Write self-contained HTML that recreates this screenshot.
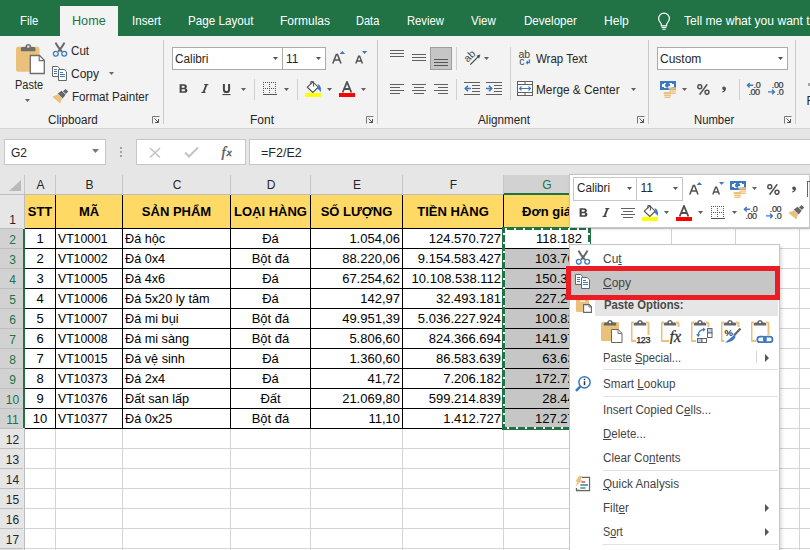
<!DOCTYPE html><html><head><meta charset="utf-8"><style>
html,body{margin:0;padding:0;width:810px;height:550px;overflow:hidden;background:#fff;font-family:"Liberation Sans", sans-serif;}
.t{position:absolute;white-space:pre;}
.r{position:absolute;}
</style></head><body>
<div class="r" style="left:0px;top:0px;width:810px;height:36px;background:#217346"></div>
<div class="r" style="left:60px;top:6px;width:58px;height:30px;background:#f3f3f3"></div>
<div class="t" style="left:19.5px;top:14px;font-size:13px;line-height:13px;color:#ffffff;font-weight:400;transform:scaleX(0.875);transform-origin:0 0;">File</div>
<div class="t" style="left:72px;top:14px;font-size:13px;line-height:13px;color:#217346;font-weight:400;transform:scaleX(0.971);transform-origin:0 0;">Home</div>
<div class="t" style="left:132px;top:14px;font-size:13px;line-height:13px;color:#ffffff;font-weight:400;transform:scaleX(0.891);transform-origin:0 0;">Insert</div>
<div class="t" style="left:188px;top:14px;font-size:13px;line-height:13px;color:#ffffff;font-weight:400;transform:scaleX(0.897);transform-origin:0 0;">Page Layout</div>
<div class="t" style="left:280px;top:14px;font-size:13px;line-height:13px;color:#ffffff;font-weight:400;transform:scaleX(0.923);transform-origin:0 0;">Formulas</div>
<div class="t" style="left:356px;top:14px;font-size:13px;line-height:13px;color:#ffffff;font-weight:400;transform:scaleX(0.848);transform-origin:0 0;">Data</div>
<div class="t" style="left:407px;top:14px;font-size:13px;line-height:13px;color:#ffffff;font-weight:400;transform:scaleX(0.864);transform-origin:0 0;">Review</div>
<div class="t" style="left:471px;top:14px;font-size:13px;line-height:13px;color:#ffffff;font-weight:400;transform:scaleX(0.886);transform-origin:0 0;">View</div>
<div class="t" style="left:523.5px;top:14px;font-size:13px;line-height:13px;color:#ffffff;font-weight:400;transform:scaleX(0.892);transform-origin:0 0;">Developer</div>
<div class="t" style="left:603.5px;top:14px;font-size:13px;line-height:13px;color:#ffffff;font-weight:400;transform:scaleX(0.927);transform-origin:0 0;">Help</div>
<div class="t" style="left:683.5px;top:14px;font-size:13px;line-height:13px;color:#ffffff;font-weight:400;transform:scaleX(0.93);transform-origin:0 0;">Tell me what you want to do</div>
<svg class="r" style="left:656px;top:12px" width="16" height="18" viewBox="0 0 16 18"><path d="M8 1.2C5 1.2 2.6 3.5 2.6 6.6C2.6 8.6 3.6 9.8 4.6 10.9C5.1 11.5 5.4 12.2 5.4 13V13.8H10.6V13C10.6 12.2 10.9 11.5 11.4 10.9C12.4 9.8 13.4 8.6 13.4 6.6C13.4 3.5 11 1.2 8 1.2Z" fill="none" stroke="#fff" stroke-width="1.2"/><path d="M5.6 15.5H10.4M6.3 17.2H9.7" stroke="#fff" stroke-width="1.1"/></svg>
<div class="r" style="left:0px;top:36px;width:810px;height:92px;background:#f3f3f3"></div>
<div class="r" style="left:0px;top:128px;width:810px;height:1px;background:#d5d5d5"></div>
<div class="r" style="left:163px;top:40px;width:1px;height:84px;background:#c8c8c8"></div>
<div class="r" style="left:377px;top:40px;width:1px;height:84px;background:#c8c8c8"></div>
<div class="r" style="left:648px;top:40px;width:1px;height:84px;background:#c8c8c8"></div>
<div class="r" style="left:795px;top:40px;width:1px;height:84px;background:#c8c8c8"></div>
<div class="t" style="left:48px;top:114px;font-size:12px;line-height:12px;color:#262626;font-weight:400;transform:scaleX(0.969);transform-origin:0 0;">Clipboard</div>
<div class="t" style="left:250px;top:114px;font-size:12px;line-height:12px;color:#262626;font-weight:400;">Font</div>
<div class="t" style="left:478px;top:114px;font-size:12px;line-height:12px;color:#262626;font-weight:400;transform:scaleX(0.976);transform-origin:0 0;">Alignment</div>
<div class="t" style="left:693.5px;top:114px;font-size:12px;line-height:12px;color:#262626;font-weight:400;transform:scaleX(0.942);transform-origin:0 0;">Number</div>
<svg class="r" style="left:152px;top:116px" width="8" height="8" viewBox="0 0 8 8"><path d="M0.5 7.5V0.5H7.5" fill="none" stroke="#777" stroke-width="1"/><path d="M2.5 2.5L6.5 6.5M3 6.5H6.5V3" fill="none" stroke="#505050" stroke-width="1"/></svg>
<svg class="r" style="left:366px;top:116px" width="8" height="8" viewBox="0 0 8 8"><path d="M0.5 7.5V0.5H7.5" fill="none" stroke="#777" stroke-width="1"/><path d="M2.5 2.5L6.5 6.5M3 6.5H6.5V3" fill="none" stroke="#505050" stroke-width="1"/></svg>
<svg class="r" style="left:637px;top:116px" width="8" height="8" viewBox="0 0 8 8"><path d="M0.5 7.5V0.5H7.5" fill="none" stroke="#777" stroke-width="1"/><path d="M2.5 2.5L6.5 6.5M3 6.5H6.5V3" fill="none" stroke="#505050" stroke-width="1"/></svg>
<svg class="r" style="left:784px;top:116px" width="8" height="8" viewBox="0 0 8 8"><path d="M0.5 7.5V0.5H7.5" fill="none" stroke="#777" stroke-width="1"/><path d="M2.5 2.5L6.5 6.5M3 6.5H6.5V3" fill="none" stroke="#505050" stroke-width="1"/></svg>
<svg class="r" style="left:14px;top:42px" width="32" height="34" viewBox="0 0 32 34">
<rect x="2" y="4.8" width="23.5" height="25" rx="2.2" fill="#eac17a"/>
<path d="M6.9 9.3V6.4C6.9 5.6 7.5 5 8.3 5H11.3C11.4 3.3 12.6 2 14.3 2C16 2 17.2 3.3 17.3 5H20C20.8 5 21.4 5.6 21.4 6.4V9.3Z" fill="#6d6d6d"/>
<rect x="13.2" y="3.6" width="2.2" height="2" fill="#f3f3f3"/>
<path d="M16.3 13.5H25.5L30.3 18.3V31.5H16.3Z" fill="#fff" stroke="#6d6d6d" stroke-width="1.3"/>
<path d="M25.2 13.8V18.6H30" fill="none" stroke="#6d6d6d" stroke-width="1.1"/>
</svg>
<div class="t" style="left:14.7px;top:79px;font-size:12px;line-height:12px;color:#262626;font-weight:400;transform:scaleX(0.913);transform-origin:0 0;">Paste</div>
<svg class="r" style="left:25px;top:99px" width="5" height="3" viewBox="0 0 5 3"><path d="M0 0H5L2.5 3Z" fill="#666"/></svg>
<svg class="r" style="left:52px;top:42px" width="16" height="15" viewBox="0 0 16 15"><path d="M3.6 0.6C4.8 3.4 7 6.2 9.8 9.6M12.4 0.6C11.2 3.4 9 6.2 6.2 9.6" stroke="#666" stroke-width="2" fill="none"/>
<circle cx="3.8" cy="11.8" r="2.4" fill="none" stroke="#3c79c2" stroke-width="1.3"/>
<circle cx="12.2" cy="11.8" r="2.4" fill="none" stroke="#3c79c2" stroke-width="1.3"/></svg>
<div class="t" style="left:71px;top:45px;font-size:12px;line-height:12px;color:#262626;font-weight:400;transform:scaleX(0.968);transform-origin:0 0;">Cut</div>
<svg class="r" style="left:52px;top:66px" width="16" height="15" viewBox="0 0 16 15"><path d="M0.5 0.5H5.7L7.5 2.3V10.5H0.5Z" fill="#fff" stroke="#666" stroke-width="1"/>
<path d="M6.5 3.5H12.2L14.5 5.8V14.5H6.5Z" fill="#fff" stroke="#666" stroke-width="1"/>
<path d="M2 3.5H5M2 5.5H5M2 7.5H5M8 6.5H11M8 8.5H13M8 10.5H13" stroke="#3c79c2" stroke-width="1"/></svg>
<div class="t" style="left:71px;top:68px;font-size:12px;line-height:12px;color:#262626;font-weight:400;">Copy</div>
<svg class="r" style="left:109px;top:72px" width="5" height="3" viewBox="0 0 5 3"><path d="M0 0H5L2.5 3Z" fill="#666"/></svg>
<svg class="r" style="left:52px;top:89px" width="17" height="15" viewBox="0 0 17 15"><path d="M0.3 7.8L6 5.3L10 9.3L8.3 14.4Z" fill="#eac17a"/>
<path d="M5.8 4.6L9.6 1.7L13.6 5.7L10.7 9.5Z" fill="#666"/>
<path d="M11 2.2L13.6 0L16.2 2.6L13.9 5.1Z" fill="#666"/></svg>
<div class="t" style="left:71.5px;top:91px;font-size:12px;line-height:12px;color:#262626;font-weight:400;transform:scaleX(0.966);transform-origin:0 0;">Format Painter</div>
<div class="r" style="left:172px;top:47px;width:111px;height:23px;background:#fff;border:1px solid #ababab;box-sizing:border-box"></div>
<div class="r" style="left:282px;top:47px;width:44px;height:23px;background:#fff;border:1px solid #ababab;box-sizing:border-box"></div>
<div class="t" style="left:175px;top:53px;font-size:12px;line-height:12px;color:#262626;font-weight:400;transform:scaleX(0.982);transform-origin:0 0;">Calibri</div>
<svg class="r" style="left:273px;top:57px" width="5" height="3" viewBox="0 0 5 3"><path d="M0 0H5L2.5 3Z" fill="#555"/></svg>
<div class="t" style="left:286px;top:53px;font-size:12px;line-height:12px;color:#262626;font-weight:400;">11</div>
<svg class="r" style="left:316px;top:57px" width="5" height="3" viewBox="0 0 5 3"><path d="M0 0H5L2.5 3Z" fill="#555"/></svg>
<svg class="r" style="left:332px;top:51px" width="14" height="13" viewBox="0 0 14 13"><path d="M0.8 12.6L4.3 3.4H5.5L9 12.6M2.4 9.1H7.4" fill="none" stroke="#505050" stroke-width="1.5"/><path d="M7.6 2.9H13.1L10.35 0Z" fill="#3c79c2"/></svg>
<svg class="r" style="left:355px;top:51px" width="13" height="13" viewBox="0 0 13 13"><path d="M0.8 12.6L3.6 5.2H4.6L7.4 12.6M2.1 10H6.1" fill="none" stroke="#505050" stroke-width="1.4"/><path d="M7 0.1H12.2L9.6 3.1Z" fill="#3c79c2"/></svg>
<svg class="r" style="left:178.5px;top:84px" width="9" height="9" viewBox="0 0 9 9"><path d="M0.6 0.2H4.9C7 0.2 7.9 1.3 7.9 2.5C7.9 3.5 7.3 4.1 6.5 4.35C7.6 4.6 8.4 5.4 8.4 6.5C8.4 7.9 7.4 8.8 5.3 8.8H0.6Z M2.7 1.8V3.7H4.5C5.3 3.7 5.7 3.3 5.7 2.75C5.7 2.2 5.3 1.8 4.5 1.8Z M2.7 5.2V7.2H4.8C5.7 7.2 6.1 6.8 6.1 6.2C6.1 5.6 5.7 5.2 4.8 5.2Z" fill="#444" fill-rule="evenodd"/></svg>
<svg class="r" style="left:200.5px;top:84px" width="8" height="9" viewBox="0 0 8 9"><path d="M3.3 0.6H7.3M0.5 8.4H4.5M5.4 0.6L2.6 8.4" stroke="#444" stroke-width="1.2" fill="none"/><path d="M5.3 1.2L2.7 7.8" stroke="#444" stroke-width="1.7"/></svg>
<svg class="r" style="left:222px;top:84px" width="9" height="12" viewBox="0 0 9 12"><path d="M1.9 0V5.4C1.9 7.4 2.9 8.1 4.5 8.1C6.1 8.1 7.1 7.4 7.1 5.4V0" stroke="#444" stroke-width="2" fill="none"/><rect x="0.5" y="10" width="8" height="1.1" fill="#444"/></svg>
<svg class="r" style="left:241px;top:88px" width="5" height="3" viewBox="0 0 5 3"><path d="M0 0H5L2.5 3Z" fill="#5f5f5f"/></svg>
<div class="r" style="left:254px;top:79px;width:1px;height:21px;background:#d0d0d0"></div>
<svg class="r" style="left:263px;top:82px" width="14" height="13" viewBox="0 0 14 13"><rect x="0" y="0" width="1" height="1" fill="#555"/><rect x="2" y="0" width="1" height="1" fill="#555"/><rect x="4" y="0" width="1" height="1" fill="#555"/><rect x="6" y="0" width="1" height="1" fill="#555"/><rect x="8" y="0" width="1" height="1" fill="#555"/><rect x="10" y="0" width="1" height="1" fill="#555"/><rect x="12" y="0" width="1" height="1" fill="#555"/><rect x="0" y="6" width="1" height="1" fill="#555"/><rect x="2" y="6" width="1" height="1" fill="#555"/><rect x="4" y="6" width="1" height="1" fill="#555"/><rect x="6" y="6" width="1" height="1" fill="#555"/><rect x="8" y="6" width="1" height="1" fill="#555"/><rect x="10" y="6" width="1" height="1" fill="#555"/><rect x="12" y="6" width="1" height="1" fill="#555"/><rect x="0" y="0" width="1" height="1" fill="#555"/><rect x="0" y="2" width="1" height="1" fill="#555"/><rect x="0" y="4" width="1" height="1" fill="#555"/><rect x="0" y="6" width="1" height="1" fill="#555"/><rect x="0" y="8" width="1" height="1" fill="#555"/><rect x="0" y="10" width="1" height="1" fill="#555"/><rect x="6" y="0" width="1" height="1" fill="#555"/><rect x="6" y="2" width="1" height="1" fill="#555"/><rect x="6" y="4" width="1" height="1" fill="#555"/><rect x="6" y="6" width="1" height="1" fill="#555"/><rect x="6" y="8" width="1" height="1" fill="#555"/><rect x="6" y="10" width="1" height="1" fill="#555"/><rect x="12" y="0" width="1" height="1" fill="#555"/><rect x="12" y="2" width="1" height="1" fill="#555"/><rect x="12" y="4" width="1" height="1" fill="#555"/><rect x="12" y="6" width="1" height="1" fill="#555"/><rect x="12" y="8" width="1" height="1" fill="#555"/><rect x="12" y="10" width="1" height="1" fill="#555"/><rect x="0" y="12" width="14" height="1" fill="#555"/></svg>
<svg class="r" style="left:284px;top:88px" width="5" height="3" viewBox="0 0 5 3"><path d="M0 0H5L2.5 3Z" fill="#5f5f5f"/></svg>
<div class="r" style="left:297px;top:79px;width:1px;height:21px;background:#d0d0d0"></div>
<svg class="r" style="left:305px;top:81px" width="17" height="12" viewBox="0 0 17 12"><path d="M2.3 6.2L7.8 0.9L13.3 6.2L7.8 11.5Z" fill="#fff" stroke="#505050" stroke-width="1.1"/><path d="M5.8 3.6V0.6H8.4V5.5" fill="none" stroke="#505050" stroke-width="1"/><path d="M12.6 3.2C15.2 3.8 16.6 6.3 15.8 11.2C14.8 9.6 13.4 8.4 12.3 7.6L13.6 6.2Z" fill="#3c79c2"/></svg>
<div class="r" style="left:305px;top:93px;width:16px;height:4px;background:#ffff00"></div>
<svg class="r" style="left:327px;top:88px" width="5" height="3" viewBox="0 0 5 3"><path d="M0 0H5L2.5 3Z" fill="#5f5f5f"/></svg>
<svg class="r" style="left:339px;top:81px" width="16" height="12" viewBox="0 0 16 12"><path d="M3.6 11.5L8 1L12.4 11.5M5.2 8H10.8" fill="none" stroke="#505050" stroke-width="1.8"/></svg>
<div class="r" style="left:339px;top:93px;width:16px;height:4px;background:#ff0000"></div>
<svg class="r" style="left:361px;top:88px" width="5" height="3" viewBox="0 0 5 3"><path d="M0 0H5L2.5 3Z" fill="#5f5f5f"/></svg>
<svg class="r" style="left:390px;top:50px" width="18" height="16" viewBox="0 0 18 16"><rect x="0" y="0" width="14" height="1" fill="#606060"/><rect x="0" y="3" width="14" height="1" fill="#606060"/><rect x="0" y="6" width="14" height="1" fill="#606060"/></svg>
<svg class="r" style="left:412px;top:54px" width="18" height="16" viewBox="0 0 18 16"><rect x="0" y="0" width="14" height="1" fill="#606060"/><rect x="0" y="3" width="14" height="1" fill="#606060"/><rect x="0" y="6" width="14" height="1" fill="#606060"/></svg>
<div class="r" style="left:430px;top:47px;width:22px;height:23px;background:#c5c5c5;border:1px solid #9e9e9e;box-sizing:border-box"></div>
<svg class="r" style="left:434px;top:59px" width="18" height="16" viewBox="0 0 18 16"><rect x="0" y="0" width="14" height="1" fill="#555"/><rect x="0" y="3" width="14" height="1" fill="#555"/><rect x="0" y="6" width="14" height="1" fill="#555"/></svg>
<div class="r" style="left:456px;top:47px;width:1px;height:23px;background:#d0d0d0"></div>
<svg class="r" style="left:462px;top:47px" width="28" height="20" viewBox="0 0 28 20">
<text x="7.1" y="8.7" text-anchor="middle" dominant-baseline="central" font-family="Liberation Sans" font-size="10.5" fill="#4a4a4a" transform="rotate(-45 7.1 8.7)">ab</text>
<path d="M8.3 17.6L16.5 9.4" stroke="#4a4a4a" stroke-width="1.3" fill="none"/><path d="M18.3 7.6L14.4 8.7L17.2 11.5Z" fill="#4a4a4a"/>
</svg>
<svg class="r" style="left:484px;top:57px" width="5" height="3" viewBox="0 0 5 3"><path d="M0 0H5L2.5 3Z" fill="#5f5f5f"/></svg>
<div class="r" style="left:510px;top:47px;width:1px;height:53px;background:#d0d0d0"></div>
<svg class="r" style="left:517px;top:49px" width="16" height="17" viewBox="0 0 16 17">
<text x="1.6" y="8.6" font-family="Liberation Sans" font-size="10.5" fill="#444" letter-spacing="-0.2">ab</text>
<text x="2.2" y="15.9" font-family="Liberation Sans" font-size="10.5" fill="#444">c</text>
<path d="M12.4 10.6V13.6H9.6" stroke="#3c79c2" stroke-width="1.4" fill="none"/><path d="M8.6 13.6L11 11.4V15.8Z" fill="#3c79c2"/>
</svg>
<div class="t" style="left:536px;top:53px;font-size:12px;line-height:12px;color:#262626;font-weight:400;transform:scaleX(0.956);transform-origin:0 0;">Wrap Text</div>
<svg class="r" style="left:390px;top:84px" width="18" height="16" viewBox="0 0 18 16"><rect x="0" y="0" width="14" height="1" fill="#606060"/><rect x="0" y="3" width="10" height="1" fill="#606060"/><rect x="0" y="6" width="14" height="1" fill="#606060"/><rect x="0" y="9" width="10" height="1" fill="#606060"/></svg>
<svg class="r" style="left:412px;top:84px" width="18" height="16" viewBox="0 0 18 16"><rect x="0" y="0" width="14" height="1" fill="#606060"/><rect x="2" y="3" width="10" height="1" fill="#606060"/><rect x="0" y="6" width="14" height="1" fill="#606060"/><rect x="2" y="9" width="10" height="1" fill="#606060"/></svg>
<svg class="r" style="left:434px;top:84px" width="18" height="16" viewBox="0 0 18 16"><rect x="0" y="0" width="14" height="1" fill="#606060"/><rect x="4" y="3" width="10" height="1" fill="#606060"/><rect x="0" y="6" width="14" height="1" fill="#606060"/><rect x="4" y="9" width="10" height="1" fill="#606060"/></svg>
<div class="r" style="left:456px;top:79px;width:1px;height:21px;background:#d0d0d0"></div>
<svg class="r" style="left:464px;top:82px" width="17" height="13" viewBox="0 0 17 13">
<path d="M0 0.5H16M8 3.5H16M8 6.5H16M8 9.5H16M0 12.5H16" stroke="#606060" stroke-width="1"/>
<path d="M7 6.5H1.5M4 3.8L1.3 6.5L4 9.2" stroke="#3c79c2" stroke-width="1.6" fill="none"/>
</svg>
<svg class="r" style="left:486px;top:82px" width="17" height="13" viewBox="0 0 17 13">
<path d="M0 0.5H16M8 3.5H16M8 6.5H16M8 9.5H16M0 12.5H16" stroke="#606060" stroke-width="1"/>
<path d="M0 6.5H5.5M3 3.8L5.7 6.5L3 9.2" stroke="#3c79c2" stroke-width="1.6" fill="none"/>
</svg>
<svg class="r" style="left:517px;top:81px" width="16" height="15" viewBox="0 0 16 15">
<rect x="0.5" y="0.5" width="15" height="14" fill="#fff" stroke="#606060"/>
<path d="M0.5 3.5H15.5M0.5 11.5H15.5M8 0.5V3.5M8 11.5V14.5" stroke="#606060" stroke-width="1"/>
<path d="M2.5 7.5H13.5M4.5 5.5L2.5 7.5L4.5 9.5M11.5 5.5L13.5 7.5L11.5 9.5" stroke="#3c79c2" stroke-width="1.1" fill="none"/>
</svg>
<div class="t" style="left:536px;top:84px;font-size:12px;line-height:12px;color:#262626;font-weight:400;transform:scaleX(0.987);transform-origin:0 0;">Merge &amp; Center</div>
<svg class="r" style="left:631px;top:88px" width="5" height="3" viewBox="0 0 5 3"><path d="M0 0H5L2.5 3Z" fill="#5f5f5f"/></svg>
<div class="r" style="left:657px;top:47px;width:131px;height:23px;background:#fff;border:1px solid #ababab;box-sizing:border-box"></div>
<div class="t" style="left:660px;top:53px;font-size:12px;line-height:12px;color:#262626;font-weight:400;">Custom</div>
<svg class="r" style="left:778px;top:57px" width="5" height="3" viewBox="0 0 5 3"><path d="M0 0H5L2.5 3Z" fill="#505050"/></svg>
<svg class="r" style="left:660px;top:81px" width="18" height="17" viewBox="0 0 18 17"><rect x="0" y="0" width="16" height="9" fill="#3c79c2"/>
<path d="M4 2H12V3H14V6H12V7H4V6H2V3H4Z" fill="#fff"/>
<circle cx="7.6" cy="4.3" r="2.5" fill="#3c79c2"/><rect x="8.4" y="5" width="1.9" height="1.9" fill="#fff"/>
<rect x="8.6" y="6.2" width="7.6" height="2.6" rx="1.3" fill="#eac17a"/><rect x="9" y="9.4" width="7" height="1.3" rx="0.65" fill="#eac17a"/><rect x="10" y="11.6" width="6" height="1.3" rx="0.65" fill="#eac17a"/>
<rect x="3.6" y="11" width="7.6" height="2.6" rx="1.3" fill="#eac17a"/><rect x="4" y="14" width="7" height="1.3" rx="0.65" fill="#eac17a"/><rect x="4.5" y="15.8" width="6" height="1.2" rx="0.6" fill="#eac17a"/></svg>
<svg class="r" style="left:682px;top:88px" width="5" height="3" viewBox="0 0 5 3"><path d="M0 0H5L2.5 3Z" fill="#5f5f5f"/></svg>
<svg class="r" style="left:696.5px;top:84px" width="13" height="11" viewBox="0 0 13 11"><circle cx="2.8" cy="2.7" r="2" fill="none" stroke="#505050" stroke-width="1.5"/><circle cx="10" cy="8.3" r="2" fill="none" stroke="#505050" stroke-width="1.5"/><path d="M10.2 0.3L2.6 10.7" stroke="#505050" stroke-width="1.5"/></svg>
<svg class="r" style="left:721px;top:85.5px" width="6" height="7" viewBox="0 0 6 7"><path d="M2.8 0.5C4.3 0.5 5 1.5 5 2.7C5 4.3 3.8 5.8 1.3 6.5L1 5.6C2.3 5.1 2.9 4.4 3 3.9C1.8 3.9 1.2 3.2 1.2 2.3C1.2 1.2 1.9 0.5 2.8 0.5Z" fill="#505050"/></svg>
<div class="r" style="left:739px;top:79px;width:1px;height:21px;background:#d0d0d0"></div>
<svg class="r" style="left:746px;top:82px" width="17" height="13" viewBox="0 0 17 13"><text x="7.6" y="5.8" font-family="Liberation Sans" font-size="9" fill="#333" stroke="#333" stroke-width="0.2" letter-spacing="-0.4">.0</text>
<text x="2.4" y="12.8" font-family="Liberation Sans" font-size="9" fill="#333" stroke="#333" stroke-width="0.2" letter-spacing="-0.4">.00</text>
<path d="M7.2 3.3H1.4M3.7 1L1.4 3.3L3.7 5.6" stroke="#3c79c2" stroke-width="1.4" fill="none"/></svg>
<svg class="r" style="left:767px;top:82px" width="18" height="13" viewBox="0 0 18 13"><text x="4.8" y="5.8" font-family="Liberation Sans" font-size="9" fill="#333" stroke="#333" stroke-width="0.2" letter-spacing="-0.4">.00</text>
<text x="9.6" y="12.8" font-family="Liberation Sans" font-size="9" fill="#333" stroke="#333" stroke-width="0.2" letter-spacing="-0.4">.0</text>
<path d="M1 9.9H7.4M5.1 7.6L7.4 9.9L5.1 12.2" stroke="#3c79c2" stroke-width="1.4" fill="none"/></svg>
<div class="t" style="left:806.5px;top:95px;font-size:12px;line-height:12px;color:#262626;font-weight:400;">F</div>
<div class="r" style="left:808px;top:83px;width:2px;height:3px;background:#a0a0a0;border-radius:1px 0 0 1px"></div>
<div class="r" style="left:0px;top:129px;width:810px;height:46px;background:#e6e6e6"></div>
<div class="r" style="left:4px;top:139px;width:102px;height:26px;background:#fff;border:1px solid #c6c6c6;box-sizing:border-box"></div>
<div class="t" style="left:11px;top:147px;font-size:12px;line-height:12px;color:#262626;font-weight:400;">G2</div>
<svg class="r" style="left:92px;top:149px" width="7" height="4" viewBox="0 0 7 4"><path d="M0 0H7L3.5 4Z" fill="#777"/></svg>
<div class="r" style="left:120px;top:147px;width:2px;height:2px;background:#a3a3a3"></div>
<div class="r" style="left:120px;top:151px;width:2px;height:2px;background:#a3a3a3"></div>
<div class="r" style="left:120px;top:155px;width:2px;height:2px;background:#a3a3a3"></div>
<div class="r" style="left:136px;top:139px;width:110px;height:26px;background:#fff;border:1px solid #c6c6c6;box-sizing:border-box"></div>
<svg class="r" style="left:149px;top:147px" width="12" height="11" viewBox="0 0 12 11"><path d="M1 1L11 10.5M11 1L1 10.5" stroke="#c3c3c3" stroke-width="1.5"/></svg>
<svg class="r" style="left:184px;top:146px" width="15" height="12" viewBox="0 0 15 12"><path d="M1 6.5L5 10.5L14 1.5" stroke="#c3c3c3" stroke-width="2" fill="none"/></svg>
<svg class="r" style="left:220px;top:144px" width="16" height="16" viewBox="0 0 16 16"><text x="1.5" y="12.5" font-family="Liberation Serif" font-style="italic" font-size="14.5" fill="#555" stroke="#555" stroke-width="0.35">f</text><text x="6.8" y="12.3" font-family="Liberation Serif" font-style="italic" font-size="11" fill="#555" stroke="#555" stroke-width="0.35">x</text></svg>
<div class="r" style="left:249px;top:139px;width:561px;height:26px;background:#fff;border:1px solid #c6c6c6;border-right:none;box-sizing:border-box"></div>
<div class="t" style="left:260.5px;top:147px;font-size:12px;line-height:12px;color:#262626;font-weight:400;transform:scaleX(1.044);transform-origin:0 0;">=F2/E2</div>
<div class="r" style="left:0px;top:175px;width:810px;height:20px;background:#e6e6e6"></div>
<div class="r" style="left:25px;top:195px;width:785px;height:355px;background:#fff"></div>
<div class="r" style="left:0px;top:195px;width:24px;height:355px;background:#e6e6e6"></div>
<div class="r" style="left:0px;top:229px;width:23px;height:199px;background:#d2d2d2"></div>
<div class="r" style="left:23px;top:229px;width:2px;height:199px;background:#217346"></div>
<div class="r" style="left:0px;top:228px;width:23px;height:1px;background:#bfbfbf"></div>
<div class="r" style="left:0px;top:248px;width:23px;height:1px;background:#bfbfbf"></div>
<div class="r" style="left:0px;top:268px;width:23px;height:1px;background:#bfbfbf"></div>
<div class="r" style="left:0px;top:288px;width:23px;height:1px;background:#bfbfbf"></div>
<div class="r" style="left:0px;top:308px;width:23px;height:1px;background:#bfbfbf"></div>
<div class="r" style="left:0px;top:328px;width:23px;height:1px;background:#bfbfbf"></div>
<div class="r" style="left:0px;top:348px;width:23px;height:1px;background:#bfbfbf"></div>
<div class="r" style="left:0px;top:368px;width:23px;height:1px;background:#bfbfbf"></div>
<div class="r" style="left:0px;top:388px;width:23px;height:1px;background:#bfbfbf"></div>
<div class="r" style="left:0px;top:408px;width:23px;height:1px;background:#bfbfbf"></div>
<div class="r" style="left:0px;top:428px;width:23px;height:1px;background:#bfbfbf"></div>
<div class="r" style="left:0px;top:448px;width:23px;height:1px;background:#bfbfbf"></div>
<div class="r" style="left:0px;top:468px;width:23px;height:1px;background:#bfbfbf"></div>
<div class="r" style="left:0px;top:488px;width:23px;height:1px;background:#bfbfbf"></div>
<div class="r" style="left:0px;top:508px;width:23px;height:1px;background:#bfbfbf"></div>
<div class="r" style="left:0px;top:528px;width:23px;height:1px;background:#bfbfbf"></div>
<div class="r" style="left:0px;top:548px;width:23px;height:1px;background:#bfbfbf"></div>
<div class="r" style="left:0px;top:568px;width:23px;height:1px;background:#bfbfbf"></div>
<div class="r" style="left:24px;top:175px;width:1px;height:54px;background:#bdbdbd"></div>
<div class="r" style="left:24px;top:428px;width:1px;height:122px;background:#bdbdbd"></div>
<div class="r" style="left:504px;top:175px;width:85px;height:18px;background:#d2d2d2"></div>
<div class="r" style="left:503px;top:193px;width:87px;height:2px;background:#217346"></div>
<div class="r" style="left:0px;top:194px;width:503px;height:1px;background:#bdbdbd"></div>
<div class="r" style="left:590px;top:194px;width:220px;height:1px;background:#bdbdbd"></div>
<div class="r" style="left:24px;top:175px;width:1px;height:19px;background:#c6c6c6"></div>
<div class="t" style="left:-59.5px;width:200px;text-align:center;top:179px;font-size:12px;line-height:12px;color:#262626;font-weight:400;">A</div>
<div class="r" style="left:55px;top:175px;width:1px;height:19px;background:#c6c6c6"></div>
<div class="t" style="left:-10.5px;width:200px;text-align:center;top:179px;font-size:12px;line-height:12px;color:#262626;font-weight:400;">B</div>
<div class="r" style="left:122px;top:175px;width:1px;height:19px;background:#c6c6c6"></div>
<div class="t" style="left:77.0px;width:200px;text-align:center;top:179px;font-size:12px;line-height:12px;color:#262626;font-weight:400;">C</div>
<div class="r" style="left:230px;top:175px;width:1px;height:19px;background:#c6c6c6"></div>
<div class="t" style="left:171.0px;width:200px;text-align:center;top:179px;font-size:12px;line-height:12px;color:#262626;font-weight:400;">D</div>
<div class="r" style="left:310px;top:175px;width:1px;height:19px;background:#c6c6c6"></div>
<div class="t" style="left:257.0px;width:200px;text-align:center;top:179px;font-size:12px;line-height:12px;color:#262626;font-weight:400;">E</div>
<div class="r" style="left:402px;top:175px;width:1px;height:19px;background:#c6c6c6"></div>
<div class="t" style="left:353.5px;width:200px;text-align:center;top:179px;font-size:12px;line-height:12px;color:#262626;font-weight:400;">F</div>
<div class="r" style="left:503px;top:175px;width:1px;height:19px;background:#c6c6c6"></div>
<div class="t" style="left:447.0px;width:200px;text-align:center;top:179px;font-size:12px;line-height:12px;color:#217346;font-weight:400;">G</div>
<div class="r" style="left:589px;top:175px;width:1px;height:19px;background:#c6c6c6"></div>
<div class="t" style="left:531.0px;width:200px;text-align:center;top:179px;font-size:12px;line-height:12px;color:#262626;font-weight:400;">H</div>
<div class="r" style="left:671px;top:175px;width:1px;height:19px;background:#c6c6c6"></div>
<div class="t" style="left:604.0px;width:200px;text-align:center;top:179px;font-size:12px;line-height:12px;color:#262626;font-weight:400;">I</div>
<div class="r" style="left:735px;top:175px;width:1px;height:19px;background:#c6c6c6"></div>
<div class="t" style="left:668.0px;width:200px;text-align:center;top:179px;font-size:12px;line-height:12px;color:#262626;font-weight:400;">J</div>
<div class="r" style="left:799px;top:175px;width:1px;height:19px;background:#c6c6c6"></div>
<div class="t" style="left:735.5px;width:200px;text-align:center;top:179px;font-size:12px;line-height:12px;color:#262626;font-weight:400;">K</div>
<svg class="r" style="left:9px;top:180px" width="12" height="11" viewBox="0 0 12 11"><path d="M12 0V11H0Z" fill="#b9b9b9"/></svg>
<div class="t" style="left:0.5px;width:24px;text-align:center;top:214px;font-size:12px;line-height:12px;color:#262626;font-weight:400;">1</div>
<div class="t" style="left:0.5px;width:24px;text-align:center;top:234px;font-size:12px;line-height:12px;color:#217346;font-weight:400;">2</div>
<div class="t" style="left:0.5px;width:24px;text-align:center;top:254px;font-size:12px;line-height:12px;color:#217346;font-weight:400;">3</div>
<div class="t" style="left:0.5px;width:24px;text-align:center;top:274px;font-size:12px;line-height:12px;color:#217346;font-weight:400;">4</div>
<div class="t" style="left:0.5px;width:24px;text-align:center;top:294px;font-size:12px;line-height:12px;color:#217346;font-weight:400;">5</div>
<div class="t" style="left:0.5px;width:24px;text-align:center;top:314px;font-size:12px;line-height:12px;color:#217346;font-weight:400;">6</div>
<div class="t" style="left:0.5px;width:24px;text-align:center;top:334px;font-size:12px;line-height:12px;color:#217346;font-weight:400;">7</div>
<div class="t" style="left:0.5px;width:24px;text-align:center;top:354px;font-size:12px;line-height:12px;color:#217346;font-weight:400;">8</div>
<div class="t" style="left:0.5px;width:24px;text-align:center;top:374px;font-size:12px;line-height:12px;color:#217346;font-weight:400;">9</div>
<div class="t" style="left:0.5px;width:24px;text-align:center;top:394px;font-size:12px;line-height:12px;color:#217346;font-weight:400;">10</div>
<div class="t" style="left:0.5px;width:24px;text-align:center;top:414px;font-size:12px;line-height:12px;color:#217346;font-weight:400;">11</div>
<div class="t" style="left:0.5px;width:24px;text-align:center;top:434px;font-size:12px;line-height:12px;color:#262626;font-weight:400;">12</div>
<div class="t" style="left:0.5px;width:24px;text-align:center;top:454px;font-size:12px;line-height:12px;color:#262626;font-weight:400;">13</div>
<div class="t" style="left:0.5px;width:24px;text-align:center;top:474px;font-size:12px;line-height:12px;color:#262626;font-weight:400;">14</div>
<div class="t" style="left:0.5px;width:24px;text-align:center;top:494px;font-size:12px;line-height:12px;color:#262626;font-weight:400;">15</div>
<div class="t" style="left:0.5px;width:24px;text-align:center;top:514px;font-size:12px;line-height:12px;color:#262626;font-weight:400;">16</div>
<div class="t" style="left:0.5px;width:24px;text-align:center;top:534px;font-size:12px;line-height:12px;color:#262626;font-weight:400;">17</div>
<div class="r" style="left:55px;top:195px;width:1px;height:355px;background:#d4d4d4"></div>
<div class="r" style="left:122px;top:195px;width:1px;height:355px;background:#d4d4d4"></div>
<div class="r" style="left:230px;top:195px;width:1px;height:355px;background:#d4d4d4"></div>
<div class="r" style="left:310px;top:195px;width:1px;height:355px;background:#d4d4d4"></div>
<div class="r" style="left:402px;top:195px;width:1px;height:355px;background:#d4d4d4"></div>
<div class="r" style="left:503px;top:195px;width:1px;height:355px;background:#d4d4d4"></div>
<div class="r" style="left:589px;top:195px;width:1px;height:355px;background:#d4d4d4"></div>
<div class="r" style="left:671px;top:195px;width:1px;height:355px;background:#d4d4d4"></div>
<div class="r" style="left:735px;top:195px;width:1px;height:355px;background:#d4d4d4"></div>
<div class="r" style="left:799px;top:195px;width:1px;height:355px;background:#d4d4d4"></div>
<div class="r" style="left:870px;top:195px;width:1px;height:355px;background:#d4d4d4"></div>
<div class="r" style="left:25px;top:228px;width:785px;height:1px;background:#d4d4d4"></div>
<div class="r" style="left:25px;top:248px;width:785px;height:1px;background:#d4d4d4"></div>
<div class="r" style="left:25px;top:268px;width:785px;height:1px;background:#d4d4d4"></div>
<div class="r" style="left:25px;top:288px;width:785px;height:1px;background:#d4d4d4"></div>
<div class="r" style="left:25px;top:308px;width:785px;height:1px;background:#d4d4d4"></div>
<div class="r" style="left:25px;top:328px;width:785px;height:1px;background:#d4d4d4"></div>
<div class="r" style="left:25px;top:348px;width:785px;height:1px;background:#d4d4d4"></div>
<div class="r" style="left:25px;top:368px;width:785px;height:1px;background:#d4d4d4"></div>
<div class="r" style="left:25px;top:388px;width:785px;height:1px;background:#d4d4d4"></div>
<div class="r" style="left:25px;top:408px;width:785px;height:1px;background:#d4d4d4"></div>
<div class="r" style="left:25px;top:428px;width:785px;height:1px;background:#d4d4d4"></div>
<div class="r" style="left:25px;top:448px;width:785px;height:1px;background:#d4d4d4"></div>
<div class="r" style="left:25px;top:468px;width:785px;height:1px;background:#d4d4d4"></div>
<div class="r" style="left:25px;top:488px;width:785px;height:1px;background:#d4d4d4"></div>
<div class="r" style="left:25px;top:508px;width:785px;height:1px;background:#d4d4d4"></div>
<div class="r" style="left:25px;top:528px;width:785px;height:1px;background:#d4d4d4"></div>
<div class="r" style="left:25px;top:548px;width:785px;height:1px;background:#d4d4d4"></div>
<div class="r" style="left:25px;top:568px;width:785px;height:1px;background:#d4d4d4"></div>
<div class="r" style="left:25px;top:195px;width:564px;height:33px;background:#ffd966"></div>
<div class="r" style="left:504px;top:249px;width:85px;height:179px;background:#c6c6c6"></div>
<div class="r" style="left:55px;top:195px;width:1px;height:234px;background:#000"></div>
<div class="r" style="left:122px;top:195px;width:1px;height:234px;background:#000"></div>
<div class="r" style="left:230px;top:195px;width:1px;height:234px;background:#000"></div>
<div class="r" style="left:310px;top:195px;width:1px;height:234px;background:#000"></div>
<div class="r" style="left:402px;top:195px;width:1px;height:234px;background:#000"></div>
<div class="r" style="left:503px;top:195px;width:1px;height:234px;background:#000"></div>
<div class="r" style="left:25px;top:228px;width:565px;height:1px;background:#000"></div>
<div class="r" style="left:25px;top:248px;width:565px;height:1px;background:#000"></div>
<div class="r" style="left:25px;top:268px;width:565px;height:1px;background:#000"></div>
<div class="r" style="left:25px;top:288px;width:565px;height:1px;background:#000"></div>
<div class="r" style="left:25px;top:308px;width:565px;height:1px;background:#000"></div>
<div class="r" style="left:25px;top:328px;width:565px;height:1px;background:#000"></div>
<div class="r" style="left:25px;top:348px;width:565px;height:1px;background:#000"></div>
<div class="r" style="left:25px;top:368px;width:565px;height:1px;background:#000"></div>
<div class="r" style="left:25px;top:388px;width:565px;height:1px;background:#000"></div>
<div class="r" style="left:25px;top:408px;width:565px;height:1px;background:#000"></div>
<div class="r" style="left:25px;top:428px;width:565px;height:1px;background:#000"></div>
<div class="r" style="left:589px;top:195px;width:1px;height:234px;background:#000"></div>
<div class="t" style="left:-60.0px;width:200px;text-align:center;top:205px;font-size:13px;line-height:13px;color:#000;font-weight:700;">STT</div>
<div class="t" style="left:-11.0px;width:200px;text-align:center;top:205px;font-size:13px;line-height:13px;color:#000;font-weight:700;">MÃ</div>
<div class="t" style="left:76.5px;width:200px;text-align:center;top:205px;font-size:13px;line-height:13px;color:#000;font-weight:700;">SẢN PHẨM</div>
<div class="t" style="left:170.5px;width:200px;text-align:center;top:205px;font-size:13px;line-height:13px;color:#000;font-weight:700;">LOẠI HÀNG</div>
<div class="t" style="left:256.5px;width:200px;text-align:center;top:205px;font-size:13px;line-height:13px;color:#000;font-weight:700;">SỐ LƯỢNG</div>
<div class="t" style="left:353.0px;width:200px;text-align:center;top:205px;font-size:13px;line-height:13px;color:#000;font-weight:700;">TIỀN HÀNG</div>
<div class="t" style="left:446.5px;width:200px;text-align:center;top:205px;font-size:13px;line-height:13px;color:#000;font-weight:700;">Đơn giá</div>
<div class="t" style="left:-60.0px;width:200px;text-align:center;top:232px;font-size:13px;line-height:13px;color:#000;font-weight:400;">1</div>
<div class="t" style="left:58px;top:232px;font-size:13px;line-height:13px;color:#000;font-weight:400;transform:scaleX(0.94);transform-origin:0 0;">VT10001</div>
<div class="t" style="left:124.8px;top:232px;font-size:13px;line-height:13px;color:#000;font-weight:400;transform:scaleX(0.975);transform-origin:0 0;">Đá hộc</div>
<div class="t" style="left:170.5px;width:200px;text-align:center;top:232px;font-size:13px;line-height:13px;color:#000;font-weight:400;">Đá</div>
<div class="t" style="left:200px;width:200px;text-align:right;top:232px;font-size:13px;line-height:13px;color:#000;font-weight:400;">1.054,06</div>
<div class="t" style="left:301px;width:200px;text-align:right;top:232px;font-size:13px;line-height:13px;color:#000;font-weight:400;">124.570.727</div>
<div class="t" style="left:382px;width:200px;text-align:right;top:232px;font-size:13px;line-height:13px;color:#000;font-weight:400;">118.182</div>
<div class="t" style="left:-60.0px;width:200px;text-align:center;top:252px;font-size:13px;line-height:13px;color:#000;font-weight:400;">2</div>
<div class="t" style="left:58px;top:252px;font-size:13px;line-height:13px;color:#000;font-weight:400;transform:scaleX(0.94);transform-origin:0 0;">VT10002</div>
<div class="t" style="left:124.8px;top:252px;font-size:13px;line-height:13px;color:#000;font-weight:400;transform:scaleX(0.975);transform-origin:0 0;">Đá 0x4</div>
<div class="t" style="left:170.5px;width:200px;text-align:center;top:252px;font-size:13px;line-height:13px;color:#000;font-weight:400;">Bột đá</div>
<div class="t" style="left:200px;width:200px;text-align:right;top:252px;font-size:13px;line-height:13px;color:#000;font-weight:400;">88.220,06</div>
<div class="t" style="left:301px;width:200px;text-align:right;top:252px;font-size:13px;line-height:13px;color:#000;font-weight:400;">9.154.583.427</div>
<div class="t" style="left:382px;width:200px;text-align:right;top:252px;font-size:13px;line-height:13px;color:#000;font-weight:400;">103.767</div>
<div class="t" style="left:-60.0px;width:200px;text-align:center;top:272px;font-size:13px;line-height:13px;color:#000;font-weight:400;">3</div>
<div class="t" style="left:58px;top:272px;font-size:13px;line-height:13px;color:#000;font-weight:400;transform:scaleX(0.94);transform-origin:0 0;">VT10005</div>
<div class="t" style="left:124.8px;top:272px;font-size:13px;line-height:13px;color:#000;font-weight:400;transform:scaleX(0.975);transform-origin:0 0;">Đá 4x6</div>
<div class="t" style="left:170.5px;width:200px;text-align:center;top:272px;font-size:13px;line-height:13px;color:#000;font-weight:400;">Đá</div>
<div class="t" style="left:200px;width:200px;text-align:right;top:272px;font-size:13px;line-height:13px;color:#000;font-weight:400;">67.254,62</div>
<div class="t" style="left:301px;width:200px;text-align:right;top:272px;font-size:13px;line-height:13px;color:#000;font-weight:400;">10.108.538.112</div>
<div class="t" style="left:382px;width:200px;text-align:right;top:272px;font-size:13px;line-height:13px;color:#000;font-weight:400;">150.303</div>
<div class="t" style="left:-60.0px;width:200px;text-align:center;top:292px;font-size:13px;line-height:13px;color:#000;font-weight:400;">4</div>
<div class="t" style="left:58px;top:292px;font-size:13px;line-height:13px;color:#000;font-weight:400;transform:scaleX(0.94);transform-origin:0 0;">VT10006</div>
<div class="t" style="left:124.8px;top:292px;font-size:13px;line-height:13px;color:#000;font-weight:400;transform:scaleX(0.975);transform-origin:0 0;">Đá 5x20 ly tâm</div>
<div class="t" style="left:170.5px;width:200px;text-align:center;top:292px;font-size:13px;line-height:13px;color:#000;font-weight:400;">Đá</div>
<div class="t" style="left:200px;width:200px;text-align:right;top:292px;font-size:13px;line-height:13px;color:#000;font-weight:400;">142,97</div>
<div class="t" style="left:301px;width:200px;text-align:right;top:292px;font-size:13px;line-height:13px;color:#000;font-weight:400;">32.493.181</div>
<div class="t" style="left:382px;width:200px;text-align:right;top:292px;font-size:13px;line-height:13px;color:#000;font-weight:400;">227.272</div>
<div class="t" style="left:-60.0px;width:200px;text-align:center;top:312px;font-size:13px;line-height:13px;color:#000;font-weight:400;">5</div>
<div class="t" style="left:58px;top:312px;font-size:13px;line-height:13px;color:#000;font-weight:400;transform:scaleX(0.94);transform-origin:0 0;">VT10007</div>
<div class="t" style="left:124.8px;top:312px;font-size:13px;line-height:13px;color:#000;font-weight:400;transform:scaleX(0.975);transform-origin:0 0;">Đá mi bụi</div>
<div class="t" style="left:170.5px;width:200px;text-align:center;top:312px;font-size:13px;line-height:13px;color:#000;font-weight:400;">Bột đá</div>
<div class="t" style="left:200px;width:200px;text-align:right;top:312px;font-size:13px;line-height:13px;color:#000;font-weight:400;">49.951,39</div>
<div class="t" style="left:301px;width:200px;text-align:right;top:312px;font-size:13px;line-height:13px;color:#000;font-weight:400;">5.036.227.924</div>
<div class="t" style="left:382px;width:200px;text-align:right;top:312px;font-size:13px;line-height:13px;color:#000;font-weight:400;">100.823</div>
<div class="t" style="left:-60.0px;width:200px;text-align:center;top:332px;font-size:13px;line-height:13px;color:#000;font-weight:400;">6</div>
<div class="t" style="left:58px;top:332px;font-size:13px;line-height:13px;color:#000;font-weight:400;transform:scaleX(0.94);transform-origin:0 0;">VT10008</div>
<div class="t" style="left:124.8px;top:332px;font-size:13px;line-height:13px;color:#000;font-weight:400;transform:scaleX(0.975);transform-origin:0 0;">Đá mi sàng</div>
<div class="t" style="left:170.5px;width:200px;text-align:center;top:332px;font-size:13px;line-height:13px;color:#000;font-weight:400;">Bột đá</div>
<div class="t" style="left:200px;width:200px;text-align:right;top:332px;font-size:13px;line-height:13px;color:#000;font-weight:400;">5.806,60</div>
<div class="t" style="left:301px;width:200px;text-align:right;top:332px;font-size:13px;line-height:13px;color:#000;font-weight:400;">824.366.694</div>
<div class="t" style="left:382px;width:200px;text-align:right;top:332px;font-size:13px;line-height:13px;color:#000;font-weight:400;">141.971</div>
<div class="t" style="left:-60.0px;width:200px;text-align:center;top:352px;font-size:13px;line-height:13px;color:#000;font-weight:400;">7</div>
<div class="t" style="left:58px;top:352px;font-size:13px;line-height:13px;color:#000;font-weight:400;transform:scaleX(0.94);transform-origin:0 0;">VT10015</div>
<div class="t" style="left:124.8px;top:352px;font-size:13px;line-height:13px;color:#000;font-weight:400;transform:scaleX(0.975);transform-origin:0 0;">Đá vệ sinh</div>
<div class="t" style="left:170.5px;width:200px;text-align:center;top:352px;font-size:13px;line-height:13px;color:#000;font-weight:400;">Đá</div>
<div class="t" style="left:200px;width:200px;text-align:right;top:352px;font-size:13px;line-height:13px;color:#000;font-weight:400;">1.360,60</div>
<div class="t" style="left:301px;width:200px;text-align:right;top:352px;font-size:13px;line-height:13px;color:#000;font-weight:400;">86.583.639</div>
<div class="t" style="left:382px;width:200px;text-align:right;top:352px;font-size:13px;line-height:13px;color:#000;font-weight:400;">63.636</div>
<div class="t" style="left:-60.0px;width:200px;text-align:center;top:372px;font-size:13px;line-height:13px;color:#000;font-weight:400;">8</div>
<div class="t" style="left:58px;top:372px;font-size:13px;line-height:13px;color:#000;font-weight:400;transform:scaleX(0.94);transform-origin:0 0;">VT10373</div>
<div class="t" style="left:124.8px;top:372px;font-size:13px;line-height:13px;color:#000;font-weight:400;transform:scaleX(0.975);transform-origin:0 0;">Đá 2x4</div>
<div class="t" style="left:170.5px;width:200px;text-align:center;top:372px;font-size:13px;line-height:13px;color:#000;font-weight:400;">Đá</div>
<div class="t" style="left:200px;width:200px;text-align:right;top:372px;font-size:13px;line-height:13px;color:#000;font-weight:400;">41,72</div>
<div class="t" style="left:301px;width:200px;text-align:right;top:372px;font-size:13px;line-height:13px;color:#000;font-weight:400;">7.206.182</div>
<div class="t" style="left:382px;width:200px;text-align:right;top:372px;font-size:13px;line-height:13px;color:#000;font-weight:400;">172.727</div>
<div class="t" style="left:-60.0px;width:200px;text-align:center;top:392px;font-size:13px;line-height:13px;color:#000;font-weight:400;">9</div>
<div class="t" style="left:58px;top:392px;font-size:13px;line-height:13px;color:#000;font-weight:400;transform:scaleX(0.94);transform-origin:0 0;">VT10376</div>
<div class="t" style="left:124.8px;top:392px;font-size:13px;line-height:13px;color:#000;font-weight:400;transform:scaleX(0.975);transform-origin:0 0;">Đất san lấp</div>
<div class="t" style="left:170.5px;width:200px;text-align:center;top:392px;font-size:13px;line-height:13px;color:#000;font-weight:400;">Đất</div>
<div class="t" style="left:200px;width:200px;text-align:right;top:392px;font-size:13px;line-height:13px;color:#000;font-weight:400;">21.069,80</div>
<div class="t" style="left:301px;width:200px;text-align:right;top:392px;font-size:13px;line-height:13px;color:#000;font-weight:400;">599.214.839</div>
<div class="t" style="left:382px;width:200px;text-align:right;top:392px;font-size:13px;line-height:13px;color:#000;font-weight:400;">28.440</div>
<div class="t" style="left:-60.0px;width:200px;text-align:center;top:412px;font-size:13px;line-height:13px;color:#000;font-weight:400;">10</div>
<div class="t" style="left:58px;top:412px;font-size:13px;line-height:13px;color:#000;font-weight:400;transform:scaleX(0.94);transform-origin:0 0;">VT10377</div>
<div class="t" style="left:124.8px;top:412px;font-size:13px;line-height:13px;color:#000;font-weight:400;transform:scaleX(0.975);transform-origin:0 0;">Đá 0x25</div>
<div class="t" style="left:170.5px;width:200px;text-align:center;top:412px;font-size:13px;line-height:13px;color:#000;font-weight:400;">Bột đá</div>
<div class="t" style="left:200px;width:200px;text-align:right;top:412px;font-size:13px;line-height:13px;color:#000;font-weight:400;">11,10</div>
<div class="t" style="left:301px;width:200px;text-align:right;top:412px;font-size:13px;line-height:13px;color:#000;font-weight:400;">1.412.727</div>
<div class="t" style="left:382px;width:200px;text-align:right;top:412px;font-size:13px;line-height:13px;color:#000;font-weight:400;">127.272</div>
<svg class="r" style="left:502px;top:227px" width="89" height="203" viewBox="0 0 89 203">
<rect x="1.5" y="1.5" width="86" height="200" fill="none" stroke="#fff" stroke-width="3"/>
<rect x="0.5" y="0.5" width="88" height="202" fill="none" stroke="#217346" stroke-width="1"/>
<path d="M1 2H88" stroke="#217346" stroke-width="2" stroke-dasharray="7 2" stroke-dashoffset="5"/>
<path d="M2 1V202" stroke="#217346" stroke-width="2" stroke-dasharray="7 2" stroke-dashoffset="2"/>
<path d="M1 201H88" stroke="#217346" stroke-width="2" stroke-dasharray="7 2" stroke-dashoffset="3"/>
<path d="M87 1V202" stroke="#217346" stroke-width="2" stroke-dasharray="7 2" stroke-dashoffset="2"/>
</svg>
<div class="r" style="left:569px;top:174px;width:241px;height:54px;background:#fff;border:1px solid #c6c6c6;box-sizing:border-box;box-shadow:1px 1px 3px rgba(0,0,0,0.15)"></div>
<div class="r" style="left:573px;top:177px;width:64px;height:24px;background:#fff;border:1px solid #c6c6c6;box-sizing:border-box"></div>
<div class="r" style="left:636px;top:177px;width:47px;height:24px;background:#fff;border:1px solid #c6c6c6;box-sizing:border-box"></div>
<div class="t" style="left:576.5px;top:182px;font-size:12px;line-height:12px;color:#262626;font-weight:400;transform:scaleX(0.97);transform-origin:0 0;">Calibri</div>
<svg class="r" style="left:627px;top:187px" width="5" height="3" viewBox="0 0 5 3"><path d="M0 0H5L2.5 3Z" fill="#555"/></svg>
<div class="t" style="left:640.5px;top:182px;font-size:12px;line-height:12px;color:#262626;font-weight:400;">11</div>
<svg class="r" style="left:673px;top:187px" width="5" height="3" viewBox="0 0 5 3"><path d="M0 0H5L2.5 3Z" fill="#555"/></svg>
<svg class="r" style="left:689px;top:182px" width="14" height="13" viewBox="0 0 14 13"><path d="M0.8 12.6L4.3 3.4H5.5L9 12.6M2.4 9.1H7.4" fill="none" stroke="#505050" stroke-width="1.5"/><path d="M7.6 2.9H13.1L10.35 0Z" fill="#3c79c2"/></svg>
<svg class="r" style="left:712px;top:182px" width="13" height="13" viewBox="0 0 13 13"><path d="M0.8 12.6L3.6 5.2H4.6L7.4 12.6M2.1 10H6.1" fill="none" stroke="#505050" stroke-width="1.4"/><path d="M7 0.1H12.2L9.6 3.1Z" fill="#3c79c2"/></svg>
<svg class="r" style="left:730px;top:181px" width="18" height="17" viewBox="0 0 18 17"><rect x="0" y="0" width="16" height="9" fill="#3c79c2"/>
<path d="M4 2H12V3H14V6H12V7H4V6H2V3H4Z" fill="#fff"/>
<circle cx="7.6" cy="4.3" r="2.5" fill="#3c79c2"/><rect x="8.4" y="5" width="1.9" height="1.9" fill="#fff"/>
<rect x="8.6" y="6.2" width="7.6" height="2.6" rx="1.3" fill="#eac17a"/><rect x="9" y="9.4" width="7" height="1.3" rx="0.65" fill="#eac17a"/><rect x="10" y="11.6" width="6" height="1.3" rx="0.65" fill="#eac17a"/>
<rect x="3.6" y="11" width="7.6" height="2.6" rx="1.3" fill="#eac17a"/><rect x="4" y="14" width="7" height="1.3" rx="0.65" fill="#eac17a"/><rect x="4.5" y="15.8" width="6" height="1.2" rx="0.6" fill="#eac17a"/></svg>
<svg class="r" style="left:752px;top:187px" width="5" height="3" viewBox="0 0 5 3"><path d="M0 0H5L2.5 3Z" fill="#5f5f5f"/></svg>
<svg class="r" style="left:766.5px;top:184px" width="13" height="11" viewBox="0 0 13 11"><circle cx="2.8" cy="2.7" r="2" fill="none" stroke="#505050" stroke-width="1.5"/><circle cx="10" cy="8.3" r="2" fill="none" stroke="#505050" stroke-width="1.5"/><path d="M10.2 0.3L2.6 10.7" stroke="#505050" stroke-width="1.5"/></svg>
<svg class="r" style="left:791px;top:186px" width="6" height="7" viewBox="0 0 6 7"><path d="M2.8 0.5C4.3 0.5 5 1.5 5 2.7C5 4.3 3.8 5.8 1.3 6.5L1 5.6C2.3 5.1 2.9 4.4 3 3.9C1.8 3.9 1.2 3.2 1.2 2.3C1.2 1.2 1.9 0.5 2.8 0.5Z" fill="#505050"/></svg>
<svg class="r" style="left:807px;top:181px" width="3" height="16" viewBox="0 0 3 16"><rect x="0" y="0" width="3" height="1" fill="#666"/><rect x="0" y="0" width="1" height="16" fill="#666"/></svg>
<svg class="r" style="left:579px;top:208px" width="9" height="9" viewBox="0 0 9 9"><path d="M0.6 0.2H4.9C7 0.2 7.9 1.3 7.9 2.5C7.9 3.5 7.3 4.1 6.5 4.35C7.6 4.6 8.4 5.4 8.4 6.5C8.4 7.9 7.4 8.8 5.3 8.8H0.6Z M2.7 1.8V3.7H4.5C5.3 3.7 5.7 3.3 5.7 2.75C5.7 2.2 5.3 1.8 4.5 1.8Z M2.7 5.2V7.2H4.8C5.7 7.2 6.1 6.8 6.1 6.2C6.1 5.6 5.7 5.2 4.8 5.2Z" fill="#444" fill-rule="evenodd"/></svg>
<svg class="r" style="left:601.5px;top:208px" width="8" height="9" viewBox="0 0 8 9"><path d="M3.3 0.6H7.3M0.5 8.4H4.5M5.4 0.6L2.6 8.4" stroke="#444" stroke-width="1.2" fill="none"/><path d="M5.3 1.2L2.7 7.8" stroke="#444" stroke-width="1.7"/></svg>
<svg class="r" style="left:621px;top:208px" width="18" height="16" viewBox="0 0 18 16"><rect x="0" y="0" width="14" height="1" fill="#606060"/><rect x="2" y="3" width="10" height="1" fill="#606060"/><rect x="0" y="6" width="14" height="1" fill="#606060"/><rect x="2" y="9" width="10" height="1" fill="#606060"/></svg>
<svg class="r" style="left:642px;top:205px" width="17" height="12" viewBox="0 0 17 12"><path d="M2.3 6.2L7.8 0.9L13.3 6.2L7.8 11.5Z" fill="#fff" stroke="#505050" stroke-width="1.1"/><path d="M5.8 3.6V0.6H8.4V5.5" fill="none" stroke="#505050" stroke-width="1"/><path d="M12.6 3.2C15.2 3.8 16.6 6.3 15.8 11.2C14.8 9.6 13.4 8.4 12.3 7.6L13.6 6.2Z" fill="#3c79c2"/></svg>
<div class="r" style="left:642px;top:217px;width:16px;height:4px;background:#ffff00"></div>
<svg class="r" style="left:664px;top:211px" width="5" height="3" viewBox="0 0 5 3"><path d="M0 0H5L2.5 3Z" fill="#5f5f5f"/></svg>
<svg class="r" style="left:676px;top:205px" width="16" height="12" viewBox="0 0 16 12"><path d="M3.6 11.5L8 1L12.4 11.5M5.2 8H10.8" fill="none" stroke="#505050" stroke-width="1.8"/></svg>
<div class="r" style="left:676px;top:217px;width:16px;height:4px;background:#ff0000"></div>
<svg class="r" style="left:698px;top:211px" width="5" height="3" viewBox="0 0 5 3"><path d="M0 0H5L2.5 3Z" fill="#5f5f5f"/></svg>
<svg class="r" style="left:711px;top:206px" width="14" height="13" viewBox="0 0 14 13"><rect x="0" y="0" width="1" height="1" fill="#555"/><rect x="2" y="0" width="1" height="1" fill="#555"/><rect x="4" y="0" width="1" height="1" fill="#555"/><rect x="6" y="0" width="1" height="1" fill="#555"/><rect x="8" y="0" width="1" height="1" fill="#555"/><rect x="10" y="0" width="1" height="1" fill="#555"/><rect x="12" y="0" width="1" height="1" fill="#555"/><rect x="0" y="6" width="1" height="1" fill="#555"/><rect x="2" y="6" width="1" height="1" fill="#555"/><rect x="4" y="6" width="1" height="1" fill="#555"/><rect x="6" y="6" width="1" height="1" fill="#555"/><rect x="8" y="6" width="1" height="1" fill="#555"/><rect x="10" y="6" width="1" height="1" fill="#555"/><rect x="12" y="6" width="1" height="1" fill="#555"/><rect x="0" y="0" width="1" height="1" fill="#555"/><rect x="0" y="2" width="1" height="1" fill="#555"/><rect x="0" y="4" width="1" height="1" fill="#555"/><rect x="0" y="6" width="1" height="1" fill="#555"/><rect x="0" y="8" width="1" height="1" fill="#555"/><rect x="0" y="10" width="1" height="1" fill="#555"/><rect x="6" y="0" width="1" height="1" fill="#555"/><rect x="6" y="2" width="1" height="1" fill="#555"/><rect x="6" y="4" width="1" height="1" fill="#555"/><rect x="6" y="6" width="1" height="1" fill="#555"/><rect x="6" y="8" width="1" height="1" fill="#555"/><rect x="6" y="10" width="1" height="1" fill="#555"/><rect x="12" y="0" width="1" height="1" fill="#555"/><rect x="12" y="2" width="1" height="1" fill="#555"/><rect x="12" y="4" width="1" height="1" fill="#555"/><rect x="12" y="6" width="1" height="1" fill="#555"/><rect x="12" y="8" width="1" height="1" fill="#555"/><rect x="12" y="10" width="1" height="1" fill="#555"/><rect x="0" y="12" width="14" height="1" fill="#555"/></svg>
<svg class="r" style="left:732px;top:211px" width="5" height="3" viewBox="0 0 5 3"><path d="M0 0H5L2.5 3Z" fill="#5f5f5f"/></svg>
<svg class="r" style="left:743px;top:206px" width="17" height="13" viewBox="0 0 17 13"><text x="7.6" y="5.8" font-family="Liberation Sans" font-size="9" fill="#333" stroke="#333" stroke-width="0.2" letter-spacing="-0.4">.0</text>
<text x="2.4" y="12.8" font-family="Liberation Sans" font-size="9" fill="#333" stroke="#333" stroke-width="0.2" letter-spacing="-0.4">.00</text>
<path d="M7.2 3.3H1.4M3.7 1L1.4 3.3L3.7 5.6" stroke="#3c79c2" stroke-width="1.4" fill="none"/></svg>
<svg class="r" style="left:764.5px;top:206px" width="18" height="13" viewBox="0 0 18 13"><text x="4.8" y="5.8" font-family="Liberation Sans" font-size="9" fill="#333" stroke="#333" stroke-width="0.2" letter-spacing="-0.4">.00</text>
<text x="9.6" y="12.8" font-family="Liberation Sans" font-size="9" fill="#333" stroke="#333" stroke-width="0.2" letter-spacing="-0.4">.0</text>
<path d="M1 9.9H7.4M5.1 7.6L7.4 9.9L5.1 12.2" stroke="#3c79c2" stroke-width="1.4" fill="none"/></svg>
<svg class="r" style="left:788px;top:205px" width="17" height="15" viewBox="0 0 17 15"><path d="M0.3 7.8L6 5.3L10 9.3L8.3 14.4Z" fill="#eac17a"/>
<path d="M5.8 4.6L9.6 1.7L13.6 5.7L10.7 9.5Z" fill="#666"/>
<path d="M11 2.2L13.6 0L16.2 2.6L13.9 5.1Z" fill="#666"/></svg>
<div class="r" style="left:569px;top:244px;width:211px;height:320px;background:#fff;border:1px solid #c6c6c6;box-sizing:border-box;box-shadow:2px 2px 3px rgba(0,0,0,0.13)"></div>
<svg class="r" style="left:575px;top:250px" width="16" height="15" viewBox="0 0 16 15"><path d="M3.6 0.6C4.8 3.4 7 6.2 9.8 9.6M12.4 0.6C11.2 3.4 9 6.2 6.2 9.6" stroke="#666" stroke-width="2" fill="none"/>
<circle cx="3.8" cy="11.8" r="2.4" fill="none" stroke="#3c79c2" stroke-width="1.3"/>
<circle cx="12.2" cy="11.8" r="2.4" fill="none" stroke="#3c79c2" stroke-width="1.3"/></svg>
<div class="t" style="left:603px;top:253px;font-size:12px;line-height:12px;color:#444444;font-weight:400;">Cu<u>t</u></div>
<svg class="r" style="left:575px;top:290px" width="18" height="24" viewBox="0 0 18 24">
<rect x="1" y="2" width="13" height="20" rx="1" fill="#eac17a"/>
<path d="M4 10.5V9.3C4 8.6 4.6 8 5.3 8H9.7C10.4 8 11 8.6 11 9.3V10.5Z" fill="#666"/><rect x="4.6" y="10.3" width="5.8" height="1.2" fill="#fff"/>
<path d="M8.6 14.6H14.2L16.4 16.8V22.4H8.6Z" fill="#fff" stroke="#666" stroke-width="1.1"/><path d="M14 14.8V17H16.2" fill="none" stroke="#666" stroke-width="0.9"/>
</svg>
<div class="r" style="left:566px;top:266px;width:214px;height:34px;background:#c6c6c6;border:5px solid #ec1c24;box-sizing:border-box"></div>
<svg class="r" style="left:575px;top:274px" width="16" height="15" viewBox="0 0 16 15"><path d="M0.5 0.5H5.7L7.5 2.3V10.5H0.5Z" fill="#fff" stroke="#666" stroke-width="1"/>
<path d="M6.5 3.5H12.2L14.5 5.8V14.5H6.5Z" fill="#fff" stroke="#666" stroke-width="1"/>
<path d="M2 3.5H5M2 5.5H5M2 7.5H5M8 6.5H11M8 8.5H13M8 10.5H13" stroke="#3c79c2" stroke-width="1"/></svg>
<div class="t" style="left:603px;top:277px;font-size:12px;line-height:12px;color:#444444;font-weight:400;"><u>C</u>opy</div>
<div class="r" style="left:595px;top:300px;width:183px;height:16px;background:#e6e6e6"></div>
<div class="t" style="left:604px;top:299px;font-size:12px;line-height:12px;color:#4a4a4a;font-weight:700;transform:scaleX(0.94);transform-origin:0 0;">Paste Options:</div>
<svg class="r" style="left:601px;top:320px" width="24" height="24" viewBox="0 0 24 24"><rect x="0" y="2" width="18" height="19" rx="1.5" fill="#eac17a"/>
<path d="M2.8 5.4V4.2C2.8 3.2 3.5 2.5 4.5 2.5H6.2C6.4 1 7.5 0 9 0C10.5 0 11.6 1 11.8 2.5H13.5C14.5 2.5 15.2 3.2 15.2 4.2V5.4Z" fill="#666"/>
<rect x="8" y="1.5" width="2" height="1.6" fill="#fff"/>
<path d="M10.5 9.5H17.2L21 13.3V22.5H10.5Z" fill="#fff" stroke="#666" stroke-width="1"/><path d="M17 9.8V13.5H20.7" fill="none" stroke="#666" stroke-width="0.9"/></svg>
<svg class="r" style="left:631px;top:320px" width="24" height="24" viewBox="0 0 24 24"><path d="M3 2.5H1.5C0.9 2.5 0.5 2.9 0.5 3.5V20C0.5 20.6 0.9 21 1.5 21H16.5C17.1 21 17.5 20.6 17.5 20V3.5C17.5 2.9 17.1 2.5 16.5 2.5H15" fill="none" stroke="#eac17a" stroke-width="2"/>
<path d="M2.8 5.4V4.2C2.8 3.2 3.5 2.5 4.5 2.5H6.2C6.4 1 7.5 0 9 0C10.5 0 11.6 1 11.8 2.5H13.5C14.5 2.5 15.2 3.2 15.2 4.2V5.4Z" fill="#666"/>
<rect x="8" y="1.5" width="2" height="1.6" fill="#fff"/>
<rect x="5" y="15" width="19" height="9" fill="#fff"/><text x="5.2" y="22.7" font-family="Liberation Sans" font-size="9" fill="#222" stroke="#222" stroke-width="0.25" letter-spacing="-0.4">123</text></svg>
<svg class="r" style="left:661px;top:320px" width="24" height="24" viewBox="0 0 24 24"><path d="M3 2.5H1.5C0.9 2.5 0.5 2.9 0.5 3.5V20C0.5 20.6 0.9 21 1.5 21H16.5C17.1 21 17.5 20.6 17.5 20V3.5C17.5 2.9 17.1 2.5 16.5 2.5H15" fill="none" stroke="#eac17a" stroke-width="2"/>
<path d="M2.8 5.4V4.2C2.8 3.2 3.5 2.5 4.5 2.5H6.2C6.4 1 7.5 0 9 0C10.5 0 11.6 1 11.8 2.5H13.5C14.5 2.5 15.2 3.2 15.2 4.2V5.4Z" fill="#666"/>
<rect x="8" y="1.5" width="2" height="1.6" fill="#fff"/>
<rect x="8" y="7" width="16" height="17" fill="#fff"/><text x="8.5" y="21.5" font-family="Liberation Serif" font-style="italic" font-size="16" fill="#333" stroke="#333" stroke-width="0.3">fx</text></svg>
<svg class="r" style="left:691px;top:320px" width="24" height="24" viewBox="0 0 24 24"><path d="M3 2.5H1.5C0.9 2.5 0.5 2.9 0.5 3.5V20C0.5 20.6 0.9 21 1.5 21H16.5C17.1 21 17.5 20.6 17.5 20V3.5C17.5 2.9 17.1 2.5 16.5 2.5H15" fill="none" stroke="#eac17a" stroke-width="2"/>
<path d="M2.8 5.4V4.2C2.8 3.2 3.5 2.5 4.5 2.5H6.2C6.4 1 7.5 0 9 0C10.5 0 11.6 1 11.8 2.5H13.5C14.5 2.5 15.2 3.2 15.2 4.2V5.4Z" fill="#666"/>
<rect x="8" y="1.5" width="2" height="1.6" fill="#fff"/>
<rect x="5" y="7" width="19" height="17" fill="#fff"/><path d="M13 9.6C10 9.6 7.6 11.6 7.2 14.8" stroke="#3c79c2" stroke-width="1.3" fill="none"/><path d="M12 7.4L14.6 9.6L12 11.8Z" fill="#3c79c2"/><path d="M5 14.2L7.2 17L9.4 14.2Z" fill="#3c79c2"/><rect x="16.5" y="8.5" width="4.5" height="4.5" fill="#b7d1ef" stroke="#666"/><rect x="16.5" y="13" width="4.5" height="4.5" fill="#fff" stroke="#666"/><rect x="6.5" y="18.5" width="4.5" height="4" fill="#b7d1ef" stroke="#666"/><rect x="11" y="18.5" width="4.5" height="4" fill="#fff" stroke="#666"/></svg>
<svg class="r" style="left:721px;top:320px" width="24" height="24" viewBox="0 0 24 24"><path d="M3 2.5H1.5C0.9 2.5 0.5 2.9 0.5 3.5V20C0.5 20.6 0.9 21 1.5 21H16.5C17.1 21 17.5 20.6 17.5 20V3.5C17.5 2.9 17.1 2.5 16.5 2.5H15" fill="none" stroke="#eac17a" stroke-width="2"/>
<path d="M2.8 5.4V4.2C2.8 3.2 3.5 2.5 4.5 2.5H6.2C6.4 1 7.5 0 9 0C10.5 0 11.6 1 11.8 2.5H13.5C14.5 2.5 15.2 3.2 15.2 4.2V5.4Z" fill="#666"/>
<rect x="8" y="1.5" width="2" height="1.6" fill="#fff"/>
<rect x="3" y="7" width="21" height="17" fill="#fff"/><text x="3.5" y="15.5" font-family="Liberation Sans" font-size="9.5" font-weight="700" fill="#333">%</text><path d="M19.5 8.5L13 15.5" stroke="#666" stroke-width="2.2"/><path d="M13.5 15C11 16.5 9 19 4 22.5C8.5 22.5 12.5 21 14.5 17Z" fill="#3c79c2"/></svg>
<svg class="r" style="left:751px;top:320px" width="24" height="24" viewBox="0 0 24 24"><path d="M3 2.5H1.5C0.9 2.5 0.5 2.9 0.5 3.5V20C0.5 20.6 0.9 21 1.5 21H16.5C17.1 21 17.5 20.6 17.5 20V3.5C17.5 2.9 17.1 2.5 16.5 2.5H15" fill="none" stroke="#eac17a" stroke-width="2"/>
<path d="M2.8 5.4V4.2C2.8 3.2 3.5 2.5 4.5 2.5H6.2C6.4 1 7.5 0 9 0C10.5 0 11.6 1 11.8 2.5H13.5C14.5 2.5 15.2 3.2 15.2 4.2V5.4Z" fill="#666"/>
<rect x="8" y="1.5" width="2" height="1.6" fill="#fff"/>
<rect x="5" y="15" width="19" height="9" fill="#fff"/><rect x="6.3" y="16.6" width="8.6" height="5.6" rx="2.8" fill="none" stroke="#3c79c2" stroke-width="1.8"/><rect x="12.9" y="16.6" width="8.6" height="5.6" rx="2.8" fill="none" stroke="#3c79c2" stroke-width="1.8"/><path d="M12.6 19.4H15.2" stroke="#3c79c2" stroke-width="1.8"/></svg>
<div class="t" style="left:603px;top:352px;font-size:12px;line-height:12px;color:#444444;font-weight:400;transform:scaleX(0.938);transform-origin:0 0;">Paste <u>S</u>pecial...</div>
<div class="r" style="left:756px;top:351px;width:1px;height:12px;background:#d4d4d4"></div>
<svg class="r" style="left:765px;top:354px" width="4" height="8" viewBox="0 0 4 8"><path d="M0 0L4 4L0 8Z" fill="#555"/></svg>
<div class="r" style="left:603px;top:369px;width:175px;height:1px;background:#e1e1e1"></div>
<svg class="r" style="left:574px;top:375px" width="18" height="18" viewBox="0 0 18 18">
<circle cx="10.5" cy="7.3" r="5.6" fill="#fff" stroke="#3c79c2" stroke-width="1.5"/>
<path d="M10.5 6.2V10.2" stroke="#333" stroke-width="1.5"/><rect x="9.75" y="3.7" width="1.5" height="1.5" fill="#333"/>
<path d="M6.2 11.6L2 15.8" stroke="#3c79c2" stroke-width="2.6"/>
</svg>
<div class="t" style="left:603px;top:378px;font-size:12px;line-height:12px;color:#444444;font-weight:400;transform:scaleX(0.971);transform-origin:0 0;">Smart <u>L</u>ookup</div>
<div class="r" style="left:603px;top:396px;width:175px;height:1px;background:#e1e1e1"></div>
<div class="t" style="left:603px;top:404px;font-size:12px;line-height:12px;color:#444444;font-weight:400;transform:scaleX(0.972);transform-origin:0 0;">Insert Copied C<u>e</u>lls...</div>
<div class="t" style="left:603px;top:428px;font-size:12px;line-height:12px;color:#444444;font-weight:400;transform:scaleX(0.96);transform-origin:0 0;"><u>D</u>elete...</div>
<div class="t" style="left:603px;top:452px;font-size:12px;line-height:12px;color:#444444;font-weight:400;transform:scaleX(0.97);transform-origin:0 0;">Clear Co<u>n</u>tents</div>
<div class="r" style="left:603px;top:470px;width:175px;height:1px;background:#e1e1e1"></div>
<svg class="r" style="left:574px;top:475px" width="18" height="17" viewBox="0 0 18 17">
<path d="M8 2.5H15.5V15.5H2.5V13" fill="#fff" stroke="#666" stroke-width="1.3"/>
<rect x="6" y="3.2" width="9" height="11.6" fill="#fff"/>
<path d="M7.5 7H11" stroke="#d9512c" stroke-width="1.5"/><path d="M6.3 10H14" stroke="#3c79c2" stroke-width="1.5"/><path d="M6.3 13H11.5" stroke="#3f9866" stroke-width="1.5"/>
<path d="M4.8 1H8.2L6.6 5H8.4L1.3 11.8L3.6 6.5H1.5Z" fill="#eac17a"/>
</svg>
<div class="t" style="left:603px;top:478px;font-size:12px;line-height:12px;color:#444444;font-weight:400;transform:scaleX(0.974);transform-origin:0 0;"><u>Q</u>uick Analysis</div>
<div class="t" style="left:603px;top:502px;font-size:12px;line-height:12px;color:#444444;font-weight:400;transform:scaleX(0.969);transform-origin:0 0;">Filt<u>e</u>r</div>
<svg class="r" style="left:765px;top:504px" width="4" height="8" viewBox="0 0 4 8"><path d="M0 0L4 4L0 8Z" fill="#555"/></svg>
<div class="t" style="left:603px;top:526px;font-size:12px;line-height:12px;color:#444444;font-weight:400;transform:scaleX(0.9);transform-origin:0 0;">S<u>o</u>rt</div>
<svg class="r" style="left:765px;top:528px" width="4" height="8" viewBox="0 0 4 8"><path d="M0 0L4 4L0 8Z" fill="#555"/></svg>
<div class="r" style="left:603px;top:544px;width:175px;height:1px;background:#e1e1e1"></div>
</body></html>
